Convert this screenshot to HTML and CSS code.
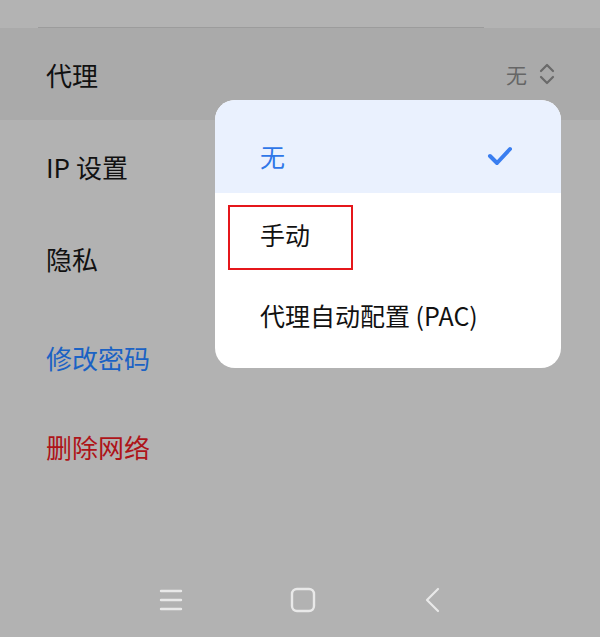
FILE: index.html
```html
<!DOCTYPE html>
<html lang="zh-CN">
<head>
  <meta charset="UTF-8" />
  <meta name="viewport" content="width=device-width, initial-scale=1" />
  <title>代理</title>
  <link rel="stylesheet" href="styles.css">
</head>
<body>

  <div class="screen">
    <div class="top">
      <div class="divider"></div>
    </div>

    <div class="list">
      <div class="row active">
        <span class="label">代理</span>
        <span class="value">
          无
          <svg class="updown" width="16" height="24" viewBox="0 0 16 24">
            <path d="M2 9 L8 3 L14 9 M2 15 L8 21 L14 15" fill="none" stroke="#6a6a6a" stroke-width="2.2" stroke-linecap="round" stroke-linejoin="round"/>
          </svg>
        </span>
      </div>
      <div class="row"><span class="label">IP 设置</span></div>
      <div class="row"><span class="label">隐私</span></div>
      <div class="row action first"><span class="label blue">修改密码</span></div>
      <div class="row action"><span class="label red">删除网络</span></div>
    </div>

    <div class="spacer"></div>

    <div class="navbar">
      <svg width="24" height="24" viewBox="0 0 24 24">
        <path d="M2 3 H22 M2 12 H22 M2 21 H22" stroke="#e9e9e9" stroke-width="2.4" stroke-linecap="round"/>
      </svg>
      <svg width="26" height="26" viewBox="0 0 26 26">
        <rect x="2" y="2" width="22" height="22" rx="5" fill="none" stroke="#e9e9e9" stroke-width="2.4"/>
      </svg>
      <svg width="18" height="26" viewBox="0 0 18 26">
        <path d="M15 2 L4 13 L15 24" fill="none" stroke="#e9e9e9" stroke-width="2.2" stroke-linecap="round" stroke-linejoin="round"/>
      </svg>
    </div>

    <!-- proxy type picker -->
    <div class="popup">
      <div class="option selected">
        <span>无</span>
        <svg width="26" height="20" viewBox="0 0 26 20">
          <path d="M3 10 L10 17 L23 3" fill="none" stroke="#3a7ef0" stroke-width="4" stroke-linecap="round" stroke-linejoin="round"/>
        </svg>
      </div>
      <div class="option mid"><span>手动</span></div>
      <div class="option last"><span>代理自动配置 (PAC)</span></div>
      <div class="mark"></div>
    </div>
  </div>

</body>
</html>
```

FILE: styles.css
```css
* {
  margin: 0;
  padding: 0;
  box-sizing: border-box;
}

body {
  font-family: "Noto Sans CJK SC", "Noto Sans", sans-serif;
  background: #b2b2b2;
  color: #111;
}

.screen {
  position: relative;
  width: 600px;
  height: 637px;
  display: flex;
  flex-direction: column;
  overflow: hidden;
}

.top {
  height: 28px;
  display: flex;
  align-items: flex-end;
  padding: 0 116px 0 38px;
  background: #b3b3b3;
}

.divider {
  flex: 1;
  height: 1px;
  background: #9c9c9c;
}

.row {
  height: 92px;
  display: flex;
  align-items: center;
  justify-content: space-between;
  padding: 0 45px 0 46px;
}

.row.active {
  background: #aaaaaa;
}

.row.action {
  height: 89px;
}

.row.action.first {
  margin-top: 9px;
}

.label {
  font-size: 26px;
}

.label.blue {
  color: #1b62c4;
}

.label.red {
  color: #ae1419;
}

.value {
  display: flex;
  align-items: center;
  gap: 12px;
  font-size: 21px;
  color: #666;
}

.spacer {
  flex: 1;
}

.navbar {
  height: 74px;
  display: flex;
  align-items: center;
  justify-content: center;
  gap: 107px;
}

.popup {
  position: absolute;
  left: 215px;
  top: 100px;
  width: 346px;
  height: 268px;
  background: #fff;
  border-radius: 20px;
  overflow: hidden;
}

.option {
  display: flex;
  align-items: center;
  justify-content: space-between;
  padding: 0 48px 0 45px;
  font-size: 25px;
  color: #111;
}

.option.selected {
  height: 93px;
  padding-top: 18px;
  background: #eaf1fe;
  color: #2f77e8;
}

.option.mid {
  height: 82px;
}

.option.last {
  height: 80px;
}

.mark {
  position: absolute;
  left: 13px;
  top: 105px;
  width: 125px;
  height: 65px;
  border: 2px solid #e5171b;
}
```
